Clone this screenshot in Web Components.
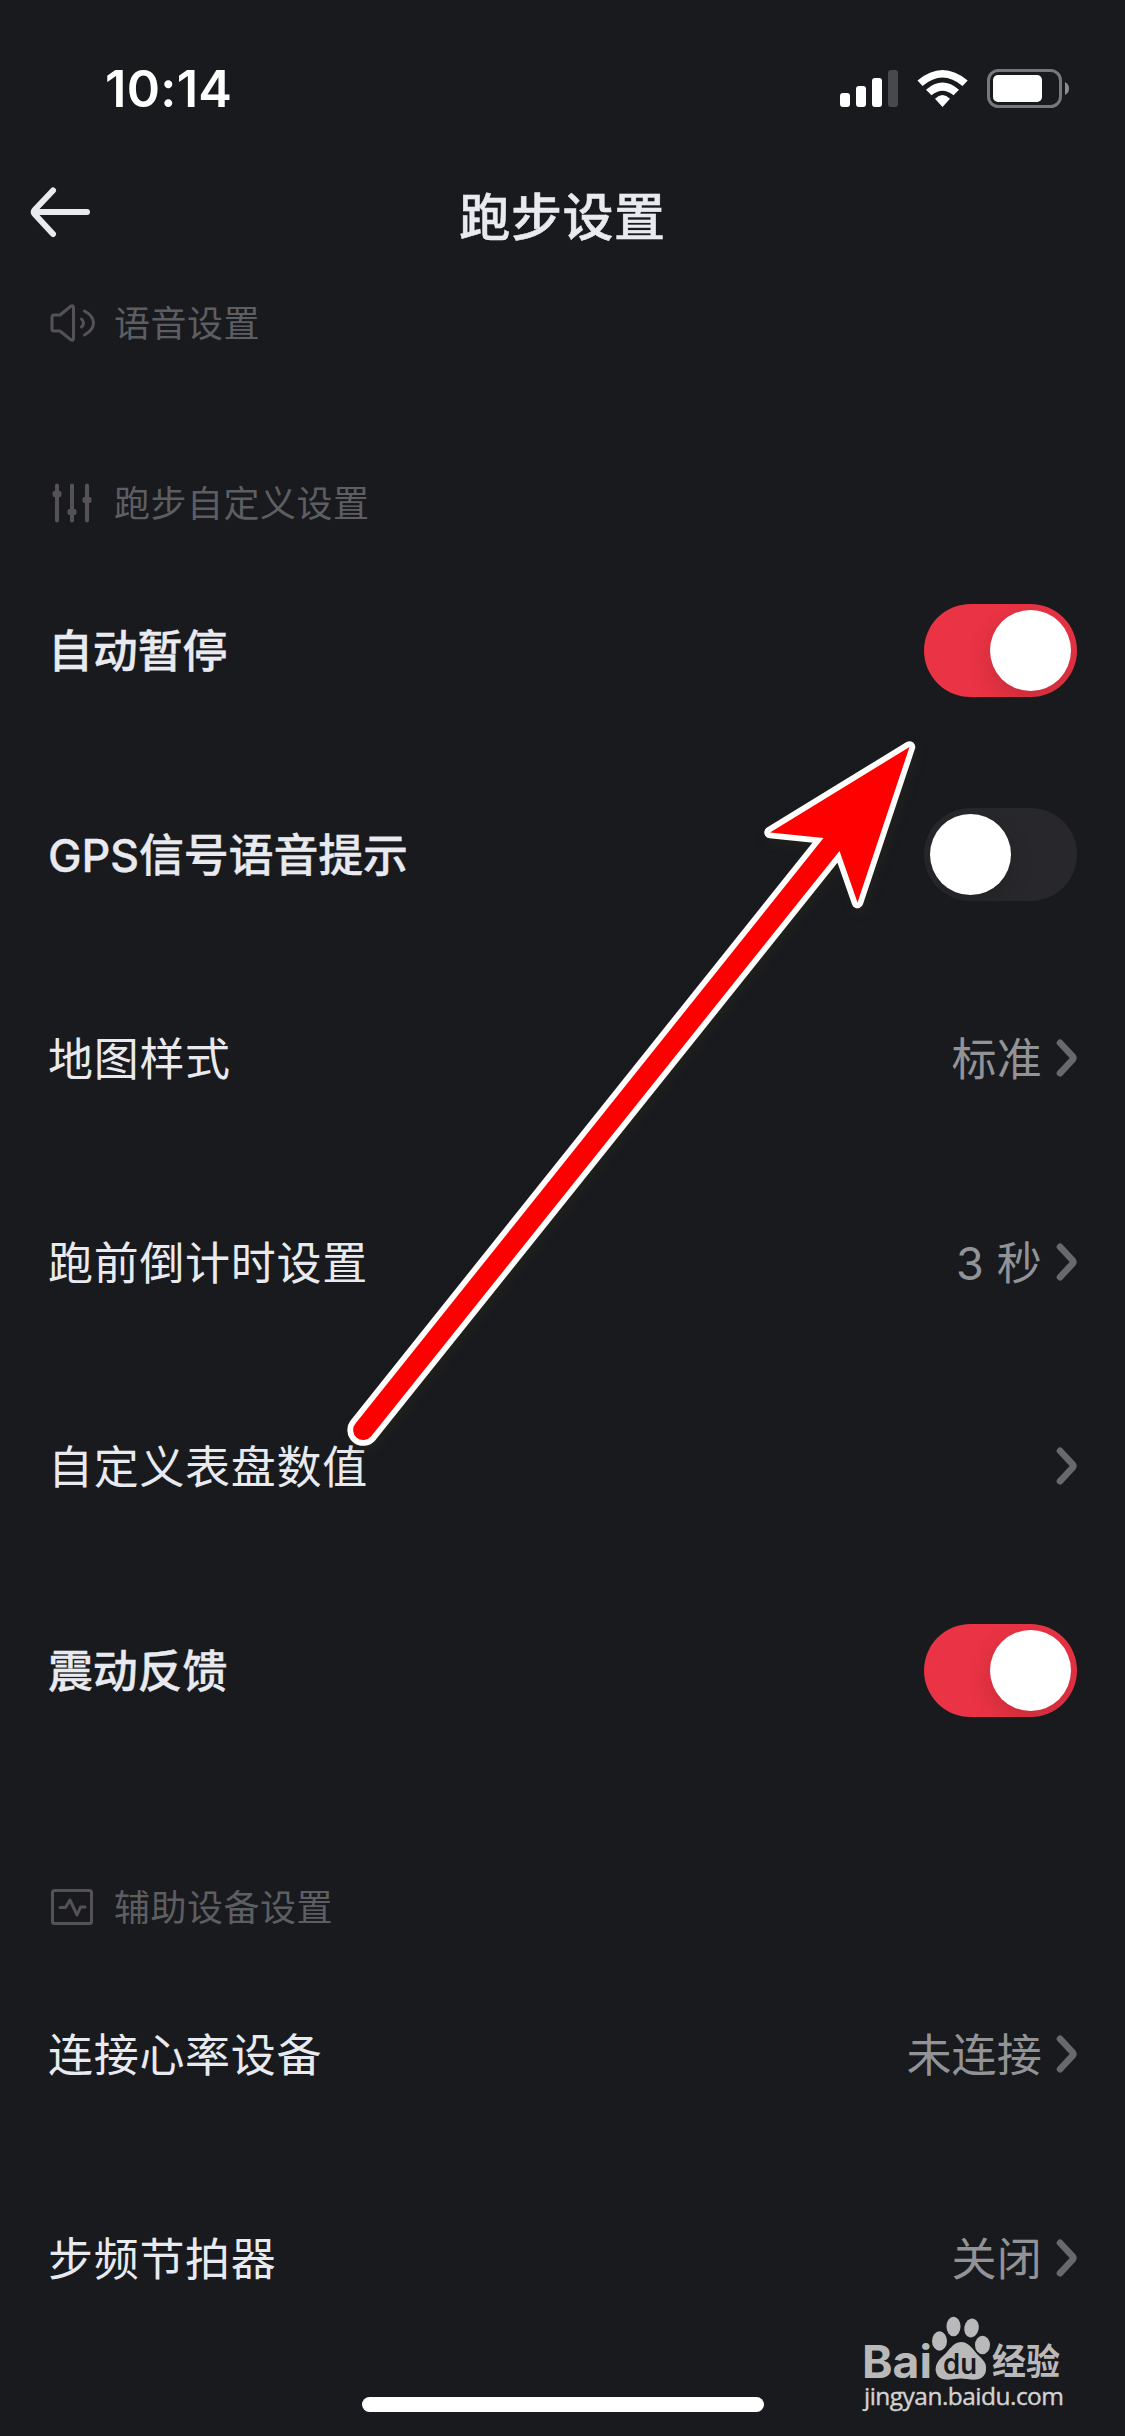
<!DOCTYPE html>
<html lang="zh-CN">
<head>
<meta charset="utf-8">
<title>跑步设置</title>
<style>
html,body{margin:0;background:#191a1e}
body{width:1125px;height:2436px;overflow:hidden;position:relative;font-family:Inter,"Noto Sans CJK SC",sans-serif;color:#e8eaef}
</style>
</head>
<body>
<run-settings-page></run-settings-page>
<script>
const define = (name, html, setup) => {
  const template = document.createElement('template');
  template.innerHTML = html;
  customElements.define(name, class extends HTMLElement {
    constructor() {
      super();
      this.attachShadow({mode: 'open'}).append(template.content.cloneNode(true));
    }
    connectedCallback() { if (setup) setup(this, this.shadowRoot); }
  });
};

define('status-bar', `
<style>
:host{display:flex;height:162px;box-sizing:border-box;padding:59px 55px 0 105px;justify-content:space-between;color:#fff}
.time{font:600 50.5px/60px Inter,sans-serif;letter-spacing:.3px}
svg{display:block;margin-top:5px}
</style>
<span class="time">10:14</span>
<svg width="230" height="50" viewBox="840 64 230 50">
  <g fill="#fff"><rect x="840" y="93" width="10" height="14" rx="3"/><rect x="856" y="86" width="10" height="21" rx="3"/><rect x="872" y="78" width="10" height="29" rx="3"/><rect x="888" y="70" width="10" height="37" rx="3" fill="#48494c"/>
  <path d="M917.500 80.500Q942.500 59.500 967.700 80.500L962.500 86Q942.500 69 922.500 86ZM926 89.700Q942.500 75.500 959 89.700L953.500 95.300Q942.500 86 931.500 95.300ZM935 98.700Q942.500 91.500 950 98.700L942.500 107Z"/>
  <rect x="993" y="75" width="49" height="27" rx="5"/></g>
  <rect x="988.500" y="70.500" width="72" height="36" rx="10" fill="none" stroke="#77787b" stroke-width="3"/>
  <path d="M1065 82Q1069 84 1069 88.500Q1069 93 1065 95Z" fill="#8c8d8f"/>
</svg>`);

define('nav-bar', `
<style>
:host{display:grid;grid-template-columns:150px 1fr 150px;align-items:center;height:108px}
svg{display:block;margin:-8px 0 0 24px}
.title{text-align:center;font-size:51px;line-height:75px;font-weight:500;letter-spacing:.6px;padding-top:3px;-webkit-text-stroke:.5px currentColor}
</style>
<svg width="72" height="60" viewBox="24 182 72 60" fill="none" stroke="#e8eaef" stroke-width="6" stroke-linecap="round" stroke-linejoin="round"><path d="M87 212H35M53 190.500L34.500 210Q33 212 34.500 214L53 234"/></svg>
<span class="title"><slot></slot></span>`);

define('section-title', `
<style>
:host{display:flex;align-items:center;height:60px;padding-left:48px;gap:18px;color:#5d5e62;font-size:36px;line-height:54px;letter-spacing:.5px}
svg{flex:none}
span{padding-top:2px}
</style>
<svg width="48" height="48" viewBox="0 0 48 48" fill="none" stroke="#545257" stroke-width="3" stroke-linecap="round" stroke-linejoin="round"></svg>
<span><slot></slot></span>`, (host, root) => {
  const art = {
    voice: '<path d="M6 16H12L22.500 7.500Q25.500 5.500 25.500 9V39Q25.500 42.500 22.500 40.500L12 32H6Q4 32 4 30V18Q4 16 6 16ZM33.500 20Q37.500 24 33.500 28M36.500 12Q45.500 17 45.500 24Q45.500 31 36.500 36"/>',
    sliders: '<path d="M9 6.500V41.500M24 6.500V41.500M39 6.500V41.500" stroke-width="4"/><g fill="#545257" stroke="none"><rect x="4.500" y="12" width="9" height="6" rx="2"/><rect x="19.500" y="30" width="9" height="6" rx="2"/><rect x="34.500" y="18" width="9" height="6" rx="2"/></g>',
    device: '<rect x="4.500" y="7.500" width="39" height="33" rx="2"/><path d="M12 24.500H17.500L22 17L29 32L32.500 24H37"/>'
  };
  root.querySelector('svg').innerHTML = art[host.getAttribute('icon')];
});

define('toggle-switch', `
<style>
:host{display:flex;box-sizing:border-box;width:153px;height:93px;border-radius:46.500px;padding:6px;background:#28282c;overflow:hidden}
:host([on]){background:#ea3344;justify-content:flex-end}
i{width:81px;height:81px;border-radius:50%;background:#fff;box-shadow:0 9px 24px rgba(0,0,0,.15)}
</style><i></i>`);

define('chevron-icon', `
<style>:host{display:block;width:24px;height:42px}svg{display:block}</style>
<svg width="24" height="42" viewBox="0 0 24 42" fill="none" stroke="#69696d" stroke-width="6.600" stroke-linecap="round" stroke-linejoin="round"><path d="M7 5.800L20 19.800Q20.800 21 20 22.200L7 36.200"/></svg>`);

define('setting-row', `
<style>
:host{display:flex;align-items:center;justify-content:space-between;height:204px;padding:0 48px;font-size:45px;line-height:66px;letter-spacing:.7px}
.label,.end ::slotted(span){padding-top:3px}
:host([strong]) .label{font-weight:500;letter-spacing:-.2px;-webkit-text-stroke:.3px currentColor}
.end{display:flex;align-items:center;gap:11px;color:#929397;letter-spacing:.2px}
</style>
<span class="label"></span><div class="end"><slot></slot></div>`, (host, root) => {
  root.querySelector('.label').textContent = host.getAttribute('label');
});

define('pointer-arrow', `
<style>:host{display:block;position:absolute;left:0;top:0;pointer-events:none}svg{display:block;filter:drop-shadow(3px 4px 5px rgba(40,40,25,.5))}</style>
<svg width="1125" height="1500" viewBox="0 0 1125 1500">
  <path d="M909.500 747L770 832.500L823.500 838L355.500 1423.500A10 10 0 0 0 371 1436.500L839.500 851L857.500 902.500Z" fill="#f00" stroke="#fff" stroke-width="11.500" stroke-linejoin="round" paint-order="stroke"/>
</svg>`);

define('home-indicator', `
<style>:host{display:flex;justify-content:center;position:absolute;left:0;right:0;bottom:24px}i{width:402px;height:15px;border-radius:8px;background:#fff}</style><i></i>`);

define('baidu-mark', `
<style>
:host{display:block;position:absolute;left:855px;top:2305px}
svg{display:block}
</style>
<svg width="220" height="120" viewBox="0 0 220 120" fill="#b9b9b9">
  <text x="7" y="73" font-family="Inter" font-size="45" font-weight="700" textLength="70" lengthAdjust="spacingAndGlyphs">Bai</text>
  <ellipse cx="84.500" cy="36" rx="7.500" ry="9.700"/><ellipse cx="98.500" cy="21.500" rx="7" ry="9.800"/><ellipse cx="116.500" cy="23" rx="7.200" ry="9.500" transform="rotate(12 116.500 23)"/><ellipse cx="127.500" cy="40" rx="7.500" ry="9.300"/>
  <path d="M106 37C98 37 94 46 88 51C81 57 80 63 81 67C83 76 93 75 99 74Q106 73 112 74C122 76 130 74 131 65C132 57 127 54 122 49C117 43 113 37 106 37Z"/>
  <text x="88" y="69" font-family="Inter" font-size="28" font-weight="600" fill="#191a1e" textLength="34" lengthAdjust="spacingAndGlyphs">du</text>
  <text x="137" y="70" font-family="Noto Sans CJK SC" font-size="36" font-weight="700" textLength="68" lengthAdjust="spacingAndGlyphs">经验</text>
  <text x="9" y="100" font-family="Open Sans" font-size="24.500" fill="#d2d2d2" stroke="#d2d2d2" stroke-width=".4" textLength="200" lengthAdjust="spacing">jingyan.baidu.com</text>
</svg>`);

define('run-settings-page', `
<style>
:host{display:block;width:1125px;height:2436px}
.list{display:flex;flex-direction:column;padding-top:23px}
.custom{margin-top:120px}
.devices{margin-top:105px}
.rows{margin-top:15px}
</style>
<status-bar></status-bar>
<nav-bar>跑步设置</nav-bar>
<div class="list">
  <section-title icon="voice">语音设置</section-title>
  <section-title class="custom" icon="sliders">跑步自定义设置</section-title>
  <div class="rows">
    <setting-row strong label="自动暂停"><toggle-switch on></toggle-switch></setting-row>
    <setting-row strong label="GPS信号语音提示"><toggle-switch></toggle-switch></setting-row>
    <setting-row label="地图样式"><span>标准</span><chevron-icon></chevron-icon></setting-row>
    <setting-row label="跑前倒计时设置"><span>3 秒</span><chevron-icon></chevron-icon></setting-row>
    <setting-row label="自定义表盘数值"><chevron-icon></chevron-icon></setting-row>
    <setting-row strong label="震动反馈"><toggle-switch on></toggle-switch></setting-row>
  </div>
  <section-title class="devices" icon="device">辅助设备设置</section-title>
  <div class="rows">
    <setting-row label="连接心率设备"><span>未连接</span><chevron-icon></chevron-icon></setting-row>
    <setting-row label="步频节拍器"><span>关闭</span><chevron-icon></chevron-icon></setting-row>
  </div>
</div>
<pointer-arrow></pointer-arrow>
<baidu-mark></baidu-mark>
<home-indicator></home-indicator>`);
</script>
</body>
</html>
